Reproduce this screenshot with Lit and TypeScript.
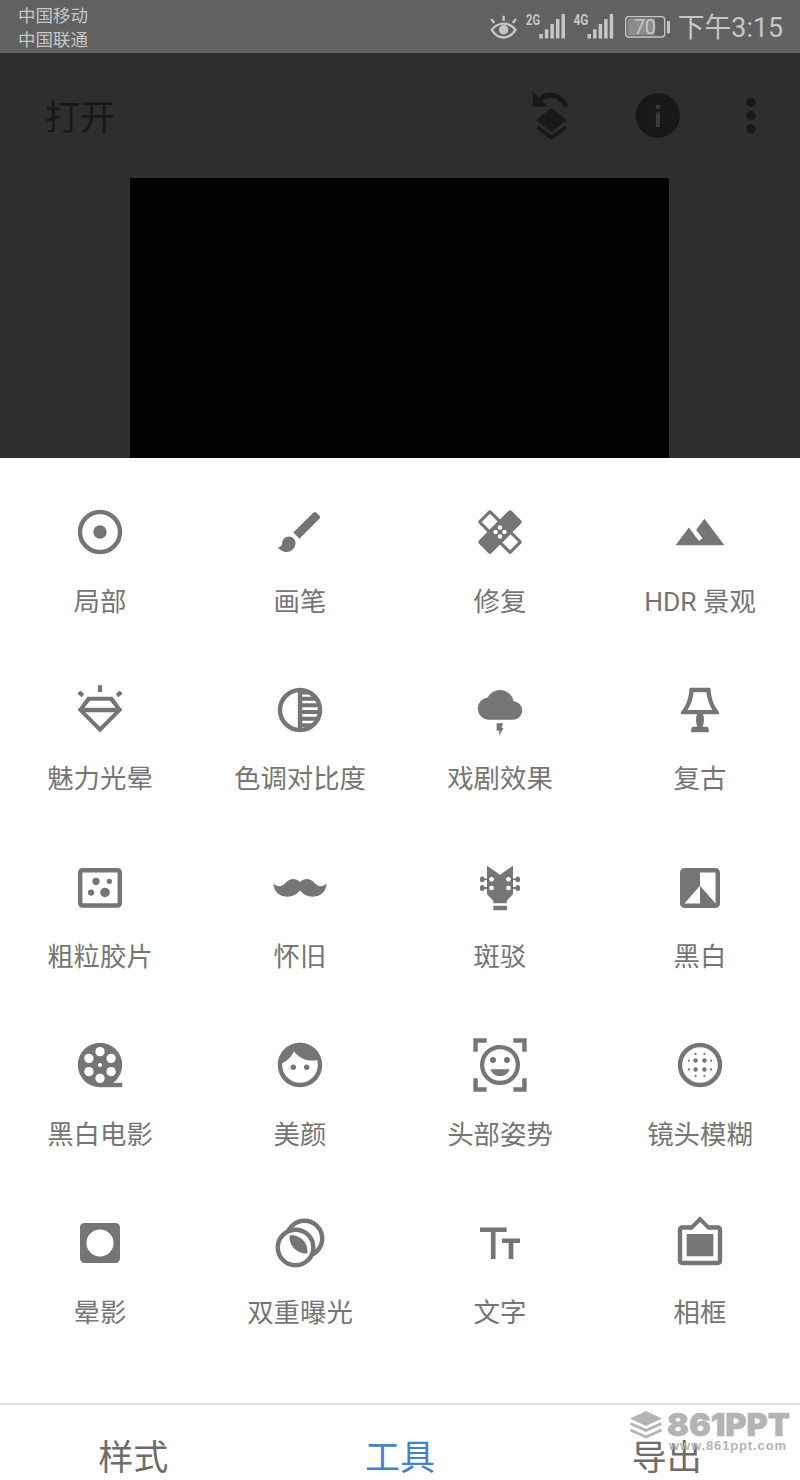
import { LitElement, html, svg, css } from "lit";
import { customElement, property, state } from "lit/decorators.js";

const CIRCLE = svg`<circle cx="12" cy="12" r="9" fill="none" stroke="currentColor" stroke-width="2"/>`;

const icons: Record<string, unknown> = {
  selective: svg`${CIRCLE}<circle cx="12" cy="12" r="3"/>`,
  brush: svg`<path d="M7 14c-1.66 0-3 1.34-3 3 0 1.31-1.16 2-2 2 .92 1.22 2.49 2 4 2 2.21 0 4-1.79 4-4 0-1.66-1.34-3-3-3zm13.71-9.37l-1.34-1.34c-.39-.39-1.02-.39-1.41 0L9 12.25 11.75 15l8.96-8.96c.39-.39.39-1.02 0-1.41z"/>`,
  healing: svg`<g transform="rotate(45 12 12)">
      <rect x="1.6" y="8" width="20.8" height="8" rx="1.1"/>
      <rect x="8" y="1.6" width="8" height="20.8" rx="1.1"/>
      <rect x="3" y="9.4" width="4.9" height="5.2" fill="#fff"/>
      <rect x="16.100" y="9.4" width="4.9" height="5.2" fill="#fff"/>
    </g>
    <g fill="#fff"><circle cx="12" cy="10" r="1"/><circle cx="10" cy="12" r="1"/><circle cx="14" cy="12" r="1"/><circle cx="12" cy="14" r="1"/></g>`,
  hdr: svg`<path d="M14 6l-3.75 5 2.85 3.8-1.6 1.2C9.81 13.75 7 10 7 10l-6 8h22L14 6z"/>`,
  glamour: svg`<path fill-rule="evenodd" d="M6.4 6h11.2L22 12 12 22.1 2 12zM7.5 7.8L5 11h14l-2.5-3.2zM5.4 13L12 19.5 18.6 13z"/>
    <path d="M12 .9v3M2.5 3.9l1.8 1.7M21.5 3.9l-1.8 1.7" fill="none" stroke="currentColor" stroke-width="1.900"/>`,
  tonal: svg`${CIRCLE}<path d="M11 3h2v18h-2zM13 3.6h4.5V5H13zM13 6h6.5v1.8H13zM13 9h8v1.8h-8zM13 12h8v1.8h-8zM13 15h7v1.8h-7zM13 18h4.6v1.6H13z"/>`,
  drama: svg`<path transform="translate(2 -.33) scale(.8333)" d="M19.35 10.04C18.67 6.59 15.64 4 12 4 9.11 4 6.6 5.64 5.35 8.04 2.34 8.36 0 10.91 0 14c0 3.31 2.69 6 6 6h13c2.76 0 5-2.24 5-5 0-2.64-2.05-4.78-4.65-4.96z"/>
    <path d="M10.5 18h2.900l-.700 2.100h.900l-1.900 3.500v-2.300h-1.200z"/>`,
  vintage: svg`<path fill-rule="evenodd" d="M8 2h8c.5 0 .8.3.8.8.2 3.7 1.200 7 3.700 10.100.3.5.1 1-.5 1H4c-.6 0-.8-.5-.5-1C6 9.800 7 6.500 7.200 2.800 7.200 2.300 7.500 2 8 2zM9.100 4C8.800 7 7.900 9.700 6.400 12h11.200C16.100 9.700 15.200 7 14.900 4z"/>
    <path d="M10.8 13.500h2.400c.8 1.900.8 4.100 0 6h1.800c.7 0 1 .6 1 2.500H8c0-1.900.3-2.500 1-2.500h1.800c-.8-1.900-.8-4.100 0-6z"/>`,
  grainy: svg`<rect x="3.100" y="4" width="17.800" height="15.900" rx="1" fill="none" stroke="currentColor" stroke-width="2"/>
    <circle cx="10.200" cy="9" r="1.650"/><circle cx="16.200" cy="9" r="1.200"/><circle cx="8" cy="14.050" r="1.400"/><circle cx="14.250" cy="14" r="2.150"/>`,
  retrolux: svg`<path d="M12 9.300C13 8.300 14.200 7.900 15.400 7.950 18 8.100 19 11.200 21.200 11.200 22.400 11.200 23.200 10.700 24 10 23.800 13.500 21.500 15.900 17.800 15.900 15.300 15.900 13.500 14.800 12 13.100 10.500 14.800 8.700 15.900 6.200 15.900 2.500 15.900.2 13.500 0 10 .8 10.700 1.600 11.200 2.800 11.200 5 11.200 6 8.100 8.600 7.950 9.800 7.900 11 8.300 12 9.300z"/>`,
  grunge: svg`<path d="M6.150 2L12 6l5.850-4v12.800l-2.800 2.900v1.200h-6.100v-1.200l-2.800-2.900zM9 20h6.100v2H9z"/>
    <path d="M4 8.100h4M4 12h4M16 8.100h4M16 12h4" stroke="currentColor" stroke-width=".8"/>
    <rect x="3" y="6.800" width="2" height="2.600" rx=".9"/><rect x="3" y="10.700" width="2" height="2.600" rx=".9"/><rect x="19" y="6.800" width="2" height="2.600" rx=".9"/><rect x="19" y="10.700" width="2" height="2.600" rx=".9"/>
    <g fill="#fff"><circle cx="8.200" cy="8.100" r="1.050"/><circle cx="8.200" cy="12" r="1.050"/><circle cx="15.800" cy="8.100" r="1.050"/><circle cx="15.800" cy="12" r="1.050"/></g>`,
  bw: svg`<path d="M19 3H5c-1.100 0-2 .9-2 2v14c0 1.100.9 2 2 2h14c1.100 0 2-.9 2-2V5c0-1.100-.9-2-2-2zm0 16l-7-8v8H5l7-8V5h7v14z"/>`,
  noir: svg`<circle cx="12" cy="12" r="10"/><path d="M12 20h10v2H12z"/>
    <g fill="#fff"><circle cx="12" cy="12" r=".95"/><circle cx="12" cy="6" r="2.100"/><circle cx="12" cy="18" r="2.100"/><circle cx="7" cy="9" r="2.100"/><circle cx="17" cy="9" r="2.100"/><circle cx="7" cy="15" r="2.100"/><circle cx="17" cy="15" r="2.100"/></g>`,
  portrait: svg`<path d="M9 11.750c-.69 0-1.250.56-1.250 1.250s.56 1.250 1.250 1.250 1.250-.56 1.250-1.250-.56-1.250-1.250-1.250zm6 0c-.69 0-1.250.56-1.250 1.250s.56 1.250 1.250 1.250 1.250-.56 1.250-1.250-.56-1.250-1.250-1.250zM12 2C6.480 2 2 6.480 2 12s4.480 10 10 10 10-4.480 10-10S17.520 2 12 2zm0 18c-4.410 0-8-3.590-8-8 0-.29.02-.58.05-.86 2.360-1.050 4.230-2.980 5.210-5.370C11.070 8.330 14.050 10 17.420 10c.78 0 1.530-.09 2.250-.26.21.71.33 1.470.33 2.260 0 4.410-3.590 8-8 8z"/>`,
  pose: svg`<circle cx="12" cy="12" r="8.050" fill="none" stroke="currentColor" stroke-width="1.900"/>
    <circle cx="8.850" cy="9.700" r="1.350"/><circle cx="15.150" cy="9.700" r="1.350"/>
    <path d="M7.600 13.900h8.800C15.600 15.900 13.900 17 12 17s-3.600-1.100-4.400-3.100z"/>
    <path d="M0 0h6v2H2v4H0zM18 0h6v6h-2V2h-4zM0 18h2v4h4v2H0zM22 18h2v6h-6v-2h4z"/>`,
  blur: svg`${CIRCLE}<circle cx="10" cy="10" r="1"/><circle cx="14" cy="10" r="1"/><circle cx="10" cy="14" r="1"/><circle cx="14" cy="14" r="1"/>
    <circle cx="10" cy="7" r=".5"/><circle cx="14" cy="7" r=".5"/><circle cx="10" cy="17" r=".5"/><circle cx="14" cy="17" r=".5"/><circle cx="7" cy="10" r=".5"/><circle cx="7" cy="14" r=".5"/><circle cx="17" cy="10" r=".5"/><circle cx="17" cy="14" r=".5"/>`,
  vignette: svg`<rect x="3" y="3" width="18" height="18" rx="2"/><circle cx="12" cy="12" r="6.100" fill="#fff"/>`,
  double: svg`<g fill="#fff" stroke="currentColor" stroke-width="2"><circle cx="14" cy="10" r="8"/><circle cx="10" cy="14" r="8"/></g>
    <path d="M7.300 8.600C11.800 8 15.900 11.800 15.300 16.700 10.800 16.900 6.900 13.400 7.300 8.600z"/>`,
  text: svg`<path d="M3 5v2h4.900v12.200H10V7h5V5zM12.900 10v2h3v7.200H18V12h3v-2z"/>`,
  frames: svg`<path d="M20 4h-4l-4-4-4 4H4c-1.100 0-2 .9-2 2v14c0 1.100.9 2 2 2h16c1.100 0 2-.9 2-2V6c0-1.100-.9-2-2-2zm0 16H4V6h4.520l3.520-3.500L15.520 6H20v14zM18 8H6v10h12"/>`,
};

const TOOLS: [string, string][] = [
  ["selective", "局部"], ["brush", "画笔"], ["healing", "修复"], ["hdr", "HDR 景观"],
  ["glamour", "魅力光晕"], ["tonal", "色调对比度"], ["drama", "戏剧效果"], ["vintage", "复古"],
  ["grainy", "粗粒胶片"], ["retrolux", "怀旧"], ["grunge", "斑驳"], ["bw", "黑白"],
  ["noir", "黑白电影"], ["portrait", "美颜"], ["pose", "头部姿势"], ["blur", "镜头模糊"],
  ["vignette", "晕影"], ["double", "双重曝光"], ["text", "文字"], ["frames", "相框"],
];

@customElement("tool-item")
class ToolItem extends LitElement {
  @property() icon = "";
  @property() label = "";

  static styles = css`
    :host { display: flex; flex-direction: column; align-items: center; padding-top: 47px; box-sizing: border-box; color: #757575; }
    .icon { display: block; width: 54px; height: 54px; fill: currentColor; overflow: visible; }
    .label { margin-top: 23.500px; font-size: 26.400px; line-height: 38px; white-space: nowrap; }
  `;

  render() {
    return html`<svg class="icon" viewBox="-.15 -.15 24.300 24.300">${icons[this.icon]}</svg><span class="label">${this.label}</span>`;
  }
}

@customElement("status-bar")
class StatusBar extends LitElement {
  static styles = css`
    :host { display: flex; flex: none; justify-content: space-between; height: 53px; box-sizing: border-box; padding: 4px 17px 0 18px; background: #616161; color: #c6c6c6; }
    .carriers { font-size: 17.500px; line-height: 24px; }
    .right { display: flex; align-items: flex-start; }
    .glyphs { display: block; flex: none; width: 184px; height: 49px; }
    .net { font: 700 15px "Roboto", sans-serif; }
    .pct { font: 400 20px "Roboto", sans-serif; }
    .time { width: 109px; text-align: right; font-size: 26.800px; line-height: 49px; white-space: nowrap; }
  `;

  private bars(x: number) {
    return [34, 29.3, 24, 19, 14].map((top, i) =>
      svg`<rect x=${x + i * 5.55} y=${top} width="3.500" height=${38.5 - top} rx=".5"/>`);
  }

  render() {
    return html`
      <div class="carriers"><div>中国移动</div><div>中国联通</div></div>
      <div class="right">
        <svg class="glyphs" viewBox="490 4 184 49" fill="currentColor">
          <g fill="none" stroke="currentColor" stroke-width="2.400">
            <path d="M491.700 29.900C498 21.500 509 21.500 515.500 29.900 509 40 498 40 491.700 29.900zM491.200 19l3.200 4M503.600 15.700v5M516 19l-3.200 4"/>
          </g>
          <circle cx="503.600" cy="29.700" r="4.700"/>
          <text class="net" x="526" y="25.300" textLength="14" lengthAdjust="spacingAndGlyphs">2G</text>
          ${this.bars(539.3)}
          <text class="net" x="573.500" y="25.300" textLength="15" lengthAdjust="spacingAndGlyphs">4G</text>
          ${this.bars(587.5)}
          <rect x="625.700" y="16.700" width="39" height="20.300" rx="3" fill="none" stroke="currentColor" stroke-width="1.300"/>
          <rect x="627.500" y="18.500" width="27.500" height="16.700" rx="1" fill="#8c8c8c"/>
          <rect x="667" y="21" width="3" height="12.500" rx="1"/>
          <text class="pct" x="634" y="34.200" textLength="22">70</text>
        </svg>
        <span class="time">下午3:15</span>
      </div>`;
  }
}

@customElement("app-root")
class AppRoot extends LitElement {
  @state() private active = 1;

  static styles = css`
    :host { display: flex; flex-direction: column; position: relative; width: 800px; height: 1480px; overflow: hidden; background: #fff; font-family: "Roboto", "Noto Sans CJK SC", sans-serif; }
    .editor { height: 405px; flex: none; background: #2e2e2e; display: flex; flex-direction: column; }
    .toolbar { height: 125px; flex: none; display: flex; align-items: center; box-sizing: border-box; padding: 0 44px 0 45px; color: #181818; }
    .open { flex: 1; font-size: 35px; line-height: 50px; padding-top: 7px; }
    .actions { display: block; width: 226px; height: 60px; }
    .photo { width: 539px; flex: 1; margin: 0 auto 0 130px; background: #000; }
    .grid { flex: none; display: grid; grid-template-columns: repeat(4, 200px); grid-auto-rows: 177.780px; height: 945px; }
    .tabs { flex: none; height: 77px; box-sizing: border-box; display: flex; border-top: 2px solid #e0e0e0; }
    .tab { flex: 1; text-align: center; font-size: 35px; line-height: 46px; padding-top: 31px; color: #6c6c6c; }
    .on { color: #4a80c6; }
    .mark { position: absolute; left: 628px; top: 1404px; width: 170px; height: 54px; color: #b4b4b4; }
    .brand { font: 900 32px "Inter", sans-serif; }
    .site { font: 700 13px "Liberation Sans", sans-serif; }
  `;

  render() {
    return html`
      <status-bar></status-bar>
      <div class="editor">
        <div class="toolbar">
          <span class="open">打开</span>
          <svg class="actions" viewBox="530 86 226 60" fill="currentColor">
            <path d="M532.700 91.300v15.400h15.400l-5.800-5.600c7.500-5.800 17.500-3 21.700 6.400l4.200-1.600c-5.300-13.300-19.500-17.500-29.200-8.500z"/>
            <path d="M551.500 108l15.200 12-15.200 12-15.500-12z"/>
            <path d="M537 127l14.500 10.700L566 127" fill="none" stroke="currentColor" stroke-width="3.600"/>
            <circle cx="657.800" cy="115.500" r="22.200"/>
            <path d="M655.900 105h4v3.800h-4zM655.900 112.500h4v14.500h-4z" fill="#3a3a3a"/>
            <circle cx="751" cy="102.300" r="4.700"/><circle cx="751" cy="115.600" r="4.700"/><circle cx="751" cy="128.800" r="4.700"/>
          </svg>
        </div>
        <div class="photo"></div>
      </div>
      <div class="grid">
        ${TOOLS.map(([icon, label]) => html`<tool-item .icon=${icon} .label=${label}></tool-item>`)}
      </div>
      <div class="tabs">
        ${["样式", "工具", "导出"].map((t, i) => html`<div class="tab ${i === this.active ? "on" : ""}" @click=${() => (this.active = i)}>${t}</div>`)}
      </div>
      <svg class="mark" viewBox="628 1404 170 54" fill="currentColor">
        <path d="M646 1411l16 7.500-16 7.500-16-7.500z"/>
        <path d="M630.500 1423.500l15.500 7 15.500-7M630.500 1430l15.500 7 15.500-7" fill="none" stroke="currentColor" stroke-width="2.800"/>
        <text class="brand" x="667" y="1436" textLength="123" lengthAdjust="spacingAndGlyphs" stroke="currentColor" stroke-width=".6">861PPT</text>
        <text class="site" x="669" y="1450" textLength="117">www.861ppt.com</text>
      </svg>`;
  }
}
